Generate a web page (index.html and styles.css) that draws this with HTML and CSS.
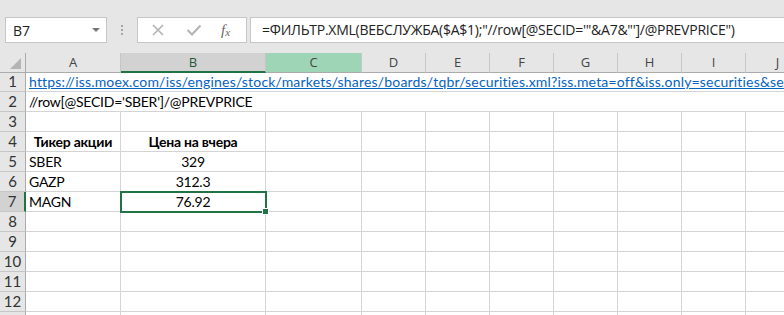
FILE: index.html
```html
<!DOCTYPE html>
<html lang="ru">
<head>
    <meta charset="UTF-8">
    <title>Книга1 - Excel</title>
    <link rel="stylesheet" href="styles.css">
</head>
<body>
    <div class="app">
        <div class="formula-row">
            <div class="name-box">
                <span>B7</span>
                <span class="caret"></span>
            </div>
            <div class="grip"><i></i><i></i><i></i></div>
            <div class="fx-buttons">
                <svg class="btn-icon" width="14" height="14" viewBox="0 0 14 14">
                    <path d="M2 2 L12 12 M12 2 L2 12" stroke="#b3b3b3" stroke-width="1.6" fill="none"/>
                </svg>
                <svg class="btn-icon" width="16" height="14" viewBox="0 0 16 14">
                    <path d="M1.5 7 L6 11.5 L14.5 2.5" stroke="#b3b3b3" stroke-width="2" fill="none"/>
                </svg>
                <span class="fx">f<sub>x</sub></span>
            </div>
            <div class="formula-input">=ФИЛЬТР.XML(ВЕБСЛУЖБА($A$1);"//row[@SECID='"&amp;A7&amp;"']/@PREVPRICE")</div>
        </div>

        <div class="sheet">
            <div class="row heads">
                <div class="corner"><span class="tri"></span></div>
                <div class="col-head">A</div>
                <div class="col-head active">B</div>
                <div class="col-head hover">C</div>
                <div class="col-head">D</div>
                <div class="col-head">E</div>
                <div class="col-head">F</div>
                <div class="col-head">G</div>
                <div class="col-head">H</div>
                <div class="col-head">I</div>
                <div class="col-head">J</div>
            </div>

            <div class="row">
                <div class="row-head">1</div>
                <div class="cell wide link">https://iss.moex.com/iss/engines/stock/markets/shares/boards/tqbr/securities.xml?iss.meta=off&amp;iss.only=securities&amp;se</div>
            </div>
            <div class="row">
                <div class="row-head">2</div>
                <div class="cell wide">//row[@SECID='SBER']/@PREVPRICE</div>
            </div>
            <div class="row">
                <div class="row-head">3</div>
                <div class="cell"></div><div class="cell"></div><div class="cell"></div><div class="cell"></div><div class="cell"></div>
                <div class="cell"></div><div class="cell"></div><div class="cell"></div><div class="cell"></div><div class="cell"></div>
            </div>
            <div class="row">
                <div class="row-head">4</div>
                <div class="cell bold center">Тикер акции</div>
                <div class="cell bold center">Цена на вчера</div>
                <div class="cell"></div><div class="cell"></div><div class="cell"></div><div class="cell"></div>
                <div class="cell"></div><div class="cell"></div><div class="cell"></div><div class="cell"></div>
            </div>
            <div class="row">
                <div class="row-head">5</div>
                <div class="cell">SBER</div>
                <div class="cell center">329</div>
                <div class="cell"></div><div class="cell"></div><div class="cell"></div><div class="cell"></div>
                <div class="cell"></div><div class="cell"></div><div class="cell"></div><div class="cell"></div>
            </div>
            <div class="row">
                <div class="row-head">6</div>
                <div class="cell">GAZP</div>
                <div class="cell center">312.3</div>
                <div class="cell"></div><div class="cell"></div><div class="cell"></div><div class="cell"></div>
                <div class="cell"></div><div class="cell"></div><div class="cell"></div><div class="cell"></div>
            </div>
            <div class="row">
                <div class="row-head active">7</div>
                <div class="cell">MAGN</div>
                <div class="cell center selected">76.92<span class="handle"></span></div>
                <div class="cell"></div><div class="cell"></div><div class="cell"></div><div class="cell"></div>
                <div class="cell"></div><div class="cell"></div><div class="cell"></div><div class="cell"></div>
            </div>
            <div class="row">
                <div class="row-head">8</div>
                <div class="cell"></div><div class="cell"></div><div class="cell"></div><div class="cell"></div><div class="cell"></div>
                <div class="cell"></div><div class="cell"></div><div class="cell"></div><div class="cell"></div><div class="cell"></div>
            </div>
            <div class="row">
                <div class="row-head">9</div>
                <div class="cell"></div><div class="cell"></div><div class="cell"></div><div class="cell"></div><div class="cell"></div>
                <div class="cell"></div><div class="cell"></div><div class="cell"></div><div class="cell"></div><div class="cell"></div>
            </div>
            <div class="row">
                <div class="row-head">10</div>
                <div class="cell"></div><div class="cell"></div><div class="cell"></div><div class="cell"></div><div class="cell"></div>
                <div class="cell"></div><div class="cell"></div><div class="cell"></div><div class="cell"></div><div class="cell"></div>
            </div>
            <div class="row">
                <div class="row-head">11</div>
                <div class="cell"></div><div class="cell"></div><div class="cell"></div><div class="cell"></div><div class="cell"></div>
                <div class="cell"></div><div class="cell"></div><div class="cell"></div><div class="cell"></div><div class="cell"></div>
            </div>
            <div class="row">
                <div class="row-head">12</div>
                <div class="cell"></div><div class="cell"></div><div class="cell"></div><div class="cell"></div><div class="cell"></div>
                <div class="cell"></div><div class="cell"></div><div class="cell"></div><div class="cell"></div><div class="cell"></div>
            </div>
            <div class="row">
                <div class="row-head"></div>
                <div class="cell"></div><div class="cell"></div><div class="cell"></div><div class="cell"></div><div class="cell"></div>
                <div class="cell"></div><div class="cell"></div><div class="cell"></div><div class="cell"></div><div class="cell"></div>
            </div>
        </div>
    </div>
</body>
</html>
```

FILE: styles.css
```css
body {
    margin: 0;
    background: #fff;
    overflow: hidden;
}
.app {
    width: 784px;
    height: 315px;
    overflow: hidden;
    background: #e6e6e6;
}

/* formula bar */
.formula-row {
    display: flex;
    align-items: center;
    height: 26px;
    padding: 17px 0 10px 5px;
    font-family: "Open Sans", sans-serif;
}
.name-box {
    box-sizing: border-box;
    width: 102px;
    height: 26px;
    background: #fff;
    border: 1px solid #c6c6c6;
    display: flex;
    align-items: center;
    justify-content: space-between;
    padding: 0 6px 0 7px;
    font-size: 14px;
    color: #222;
}
.caret {
    width: 0;
    height: 0;
    border-left: 4px solid transparent;
    border-right: 4px solid transparent;
    border-top: 4px solid #777;
}
.grip {
    width: 30px;
    display: flex;
    flex-direction: column;
    align-items: center;
    gap: 2px;
}
.grip i {
    width: 2px;
    height: 2px;
    background: #a6a6a6;
}
.fx-buttons {
    box-sizing: border-box;
    width: 110px;
    height: 26px;
    background: #fff;
    border: 1px solid #c6c6c6;
    display: flex;
    align-items: center;
    padding-left: 13px;
}
.btn-icon {
    display: block;
}
.btn-icon + .btn-icon {
    margin-left: 21px;
}
.fx {
    margin-left: 19px;
    font-family: "Liberation Serif", serif;
    font-style: italic;
    font-size: 15px;
    color: #666;
}
.fx sub {
    font-size: 11px;
    vertical-align: -1px;
}
.formula-input {
    box-sizing: border-box;
    flex: 1;
    height: 26px;
    margin-left: 3px;
    background: #fff;
    border: 1px solid #c6c6c6;
    border-right: none;
    padding-left: 11px;
    line-height: 24px;
    font-size: 14px;
    letter-spacing: -0.25px;
    color: #222;
    white-space: nowrap;
    overflow: hidden;
}

/* sheet grid */
.sheet {
    background: #fff;
    font-family: Lato, "Liberation Sans", sans-serif;
    font-size: 14px;
    letter-spacing: -0.25px;
    color: #000;
}
.row {
    display: grid;
    grid-template-columns: 26px 95px 145px 96px 64px 64px 64px 64px 64px 64px 64px;
    height: 20px;
}
.row.heads {
    height: 19px;
    background: #e6e6e6;
}
.corner {
    box-sizing: border-box;
    border-right: 1px solid #ababab;
    border-bottom: 1px solid #ababab;
    position: relative;
}
.tri {
    position: absolute;
    right: 4px;
    bottom: 3px;
    width: 0;
    height: 0;
    border-left: 11px solid transparent;
    border-bottom: 11px solid #b4b4b4;
}
.col-head {
    box-sizing: border-box;
    border-right: 1px solid #c6c6c6;
    border-bottom: 1px solid #ababab;
    text-align: center;
    font-family: "Open Sans", sans-serif;
    font-size: 13px;
    letter-spacing: 0;
    line-height: 18px;
    color: #444;
}
.col-head.active {
    background: #d2d2d2;
    border-bottom: 2px solid #217346;
    color: #1d5a38;
}
.col-head.hover {
    background: #9fd5b7;
}
.row-head {
    box-sizing: border-box;
    background: #e6e6e6;
    border-right: 1px solid #ababab;
    border-bottom: 1px solid #c6c6c6;
    text-align: center;
    font-size: 15px;
    letter-spacing: 0;
    line-height: 19px;
    color: #333;
}
.row-head.active {
    background: #d2d2d2;
    border-right: 2px solid #217346;
}
.cell {
    box-sizing: border-box;
    border-right: 1px solid #d4d4d4;
    border-bottom: 1px solid #d4d4d4;
    padding: 0 3px;
    line-height: 19px;
    white-space: nowrap;
}
.cell.wide {
    grid-column: 2 / -1;
    border-right: none;
    overflow: hidden;
}
.link {
    color: #0563c1;
    text-decoration: underline;
    letter-spacing: 0.18px;
}
.bold {
    font-weight: bold;
}
.center {
    text-align: center;
}
.selected {
    position: relative;
    outline: 2px solid #217346;
    outline-offset: -1px;
    z-index: 1;
}
.handle {
    position: absolute;
    right: -4px;
    bottom: -4px;
    width: 5px;
    height: 5px;
    background: #217346;
    border: 1px solid #fff;
}
```
